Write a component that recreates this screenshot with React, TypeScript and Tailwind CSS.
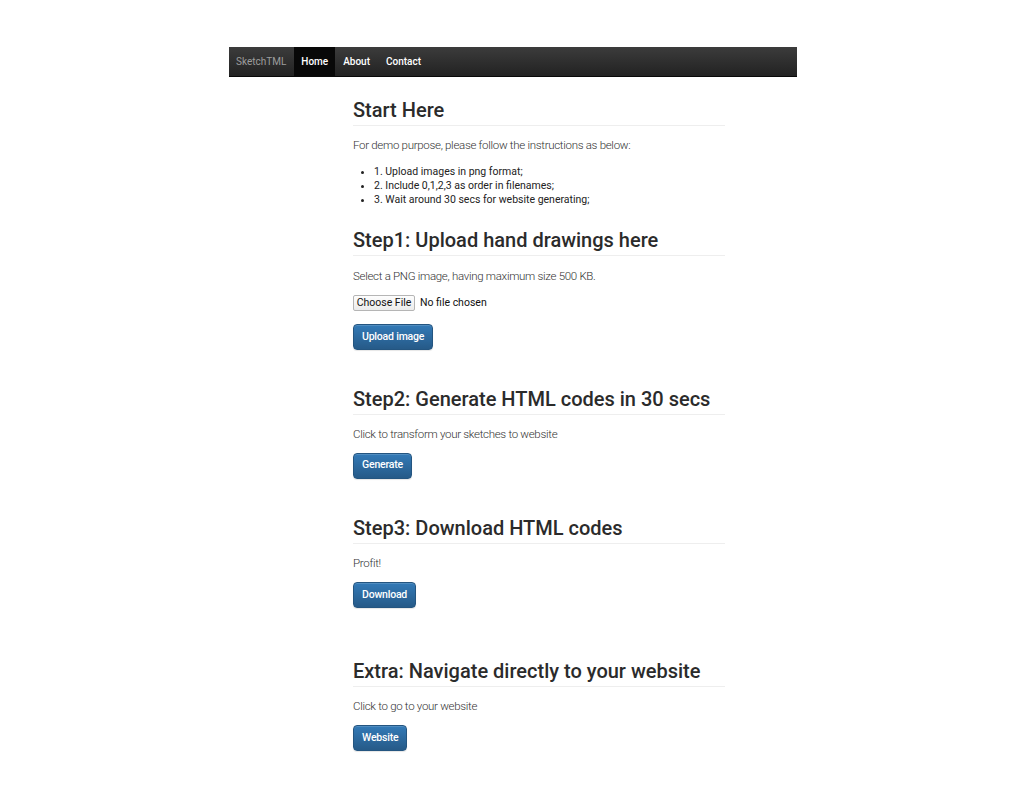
import React from "react";

const font = { fontFamily: '"Liberation Sans", Arial, sans-serif' };
const roboto = { fontFamily: 'Roboto, "Liberation Sans", Arial, sans-serif' };

function Btn({ children }: { children: React.ReactNode }) {
  return (
    <button
      style={roboto}
      className="h-[26px] px-[8px] rounded-[4px] border border-[#245580] bg-gradient-to-b from-[#337ab7] to-[#265a88] text-white text-[10.5px] tracking-[-0.2px] font-medium leading-none shadow-[inset_0_1px_0_rgba(255,255,255,0.15),0_1px_1px_rgba(0,0,0,0.1)]"
    >
      {children}
    </button>
  );
}

function Heading({ children, className }: { children: React.ReactNode; className: string }) {
  return (
    <h2
      style={roboto}
      className={`text-[20px] leading-[24px] text-[#2b2b2b] font-medium pb-[3px] border-b border-[#eee] ${className}`}
    >
      {children}
    </h2>
  );
}

function Para({ children, className }: { children: React.ReactNode; className: string }) {
  return (
    <p
      style={roboto}
      className={`text-[11.5px] tracking-[-0.3px] leading-[17px] font-light text-[#333] ${className}`}
    >
      {children}
    </p>
  );
}

export default function App() {
  return (
    <div className="min-h-[810px] bg-white pt-[47px] pl-[2px]" style={font}>
      <div className="w-[568px] mx-auto">
        <nav
          style={roboto}
          className="h-[30px] flex items-stretch bg-gradient-to-b from-[#3c3c3c] to-[#222] border-b border-[#080808] text-[10px]"
        >
          <span className="pl-[7px] pr-[8px] flex items-center text-[#9d9d9d]">SketchTML</span>
          <span className="px-[7px] flex items-center bg-[#080808] text-white font-medium">Home</span>
          <span className="px-[8px] flex items-center text-white font-medium">About</span>
          <span className="px-[8px] flex items-center text-white font-medium">Contact</span>
        </nav>

        <div className="ml-[124px] w-[372px]">
          <Heading className="mt-[21px]">Start Here</Heading>
          <Para className="mt-[11px]">For demo purpose, please follow the instructions as below:</Para>
          <ul
            style={roboto}
            className="mt-[11px] list-disc pl-[21px] text-[10.5px] leading-[14px] text-[#222]"
          >
            <li>1. Upload images in png format;</li>
            <li>2. Include 0,1,2,3 as order in filenames;</li>
            <li>3. Wait around 30 secs for website generating;</li>
          </ul>

          <Heading className="mt-[21px]">Step1: Upload hand drawings here</Heading>
          <Para className="mt-[12px]">Select a PNG image, having maximum size 500 KB.</Para>
          <div style={roboto} className="mt-[10px] flex items-center text-[10.5px] text-[#111]">
            <span className="h-[16px] w-[62px] justify-center flex items-center border border-[#b5b5b5] rounded-[2px] bg-gradient-to-b from-[#fdfdfd] to-[#ececec]">
              Choose File
            </span>
            <span className="ml-[5px]">No file chosen</span>
          </div>
          <div className="mt-[12px]">
            <Btn>Upload image</Btn>
          </div>

          <Heading className="mt-[37px]">Step2: Generate HTML codes in 30 secs</Heading>
          <Para className="mt-[11px]">Click to transform your sketches to website</Para>
          <div className="mt-[8px]">
            <Btn>Generate</Btn>
          </div>

          <Heading className="mt-[37px]">Step3: Download HTML codes</Heading>
          <Para className="mt-[11px]">Profit!</Para>
          <div className="mt-[9px]">
            <Btn>Download</Btn>
          </div>

          <Heading className="mt-[51px]">Extra: Navigate directly to your website</Heading>
          <Para className="mt-[11px]">Click to go to your website</Para>
          <div className="mt-[9px]">
            <Btn>Website</Btn>
          </div>
        </div>
      </div>
    </div>
  );
}
